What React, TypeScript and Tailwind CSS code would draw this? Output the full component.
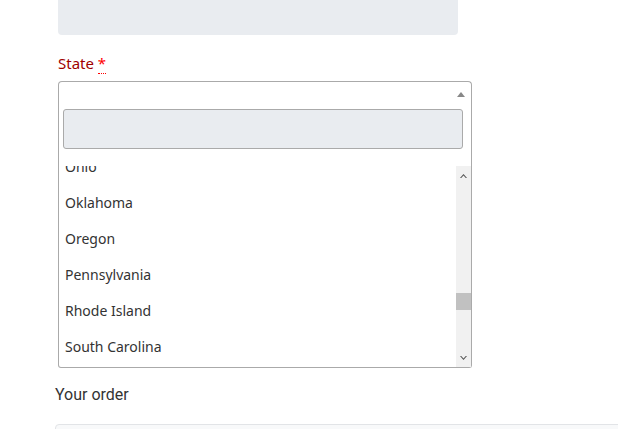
const states = ["Ohio", "Oklahoma", "Oregon", "Pennsylvania", "Rhode Island", "South Carolina", "South Dakota"];

function ScrollTrack() {
  return (
    <div className="absolute right-0 top-0 bottom-0 w-[15px] bg-[#f1f1f1] flex flex-col items-center justify-between">
      <svg width="15" height="17" viewBox="0 0 15 17">
        <path d="M4 12 L7.5 8 L11 12 L9.8 12 L7.5 9.6 L5.2 12 Z" fill="#505050" />
      </svg>
      <div className="absolute left-0 top-[127px] w-[15px] h-[17px] bg-[#c1c1c1]" />
      <svg width="15" height="17" viewBox="0 0 15 17">
        <path d="M4 6 L7.5 10 L11 6 L9.8 6 L7.5 8.4 L5.2 6 Z" fill="#505050" />
      </svg>
    </div>
  );
}

export default function App() {
  return (
    <div className="w-[618px] h-[429px] overflow-hidden bg-white pl-[55px] font-['Noto_Sans',sans-serif]">
      <div className="ml-[3px]">
        <div className="w-[400px] h-[35px] bg-[#e9ecf0] rounded-b-[4px]" />
        <label className="block mt-[18px] text-[15px] leading-[20px] text-[#a00000]">
          State{" "}
          <abbr title="required" className="text-[#ff0000] no-underline border-b border-dotted border-[#ff0000]">
            *
          </abbr>
        </label>
        <div className="mt-[8px] relative w-[414px] h-[24px] border border-b-0 border-[#aaaaaa] rounded-t-[4px] bg-white">
          <span className="absolute right-[6px] top-[10px] w-0 h-0 border-x-[4px] border-x-transparent border-b-[5px] border-b-[#888888]" />
        </div>
        <div className="w-[414px] border border-t-0 border-[#aaaaaa] rounded-b-[3px] bg-white">
          <div className="p-[4px]">
            <div className="w-[400px] h-[40px] bg-[#e9ecf0] border border-[#aaaaaa] rounded-[3px]" />
          </div>
          <div className="relative mt-[13px] h-[201px] overflow-hidden">
            <ul className="-mt-[18px] text-[14px] text-[#333333]">
              {states.map((s) => (
                <li key={s} className="h-[36px] flex items-center pl-[6px]">
                  {s}
                </li>
              ))}
            </ul>
            <ScrollTrack />
          </div>
        </div>
      </div>
      <h3 className="mt-[15px] text-[16px] leading-[24px] text-[#333333] font-['Roboto',sans-serif]">Your order</h3>
      <div className="mt-[17px] w-[600px] h-[40px] bg-[#f8f9fa] border border-[#e2e4e7] rounded-[4px]" />
    </div>
  );
}
